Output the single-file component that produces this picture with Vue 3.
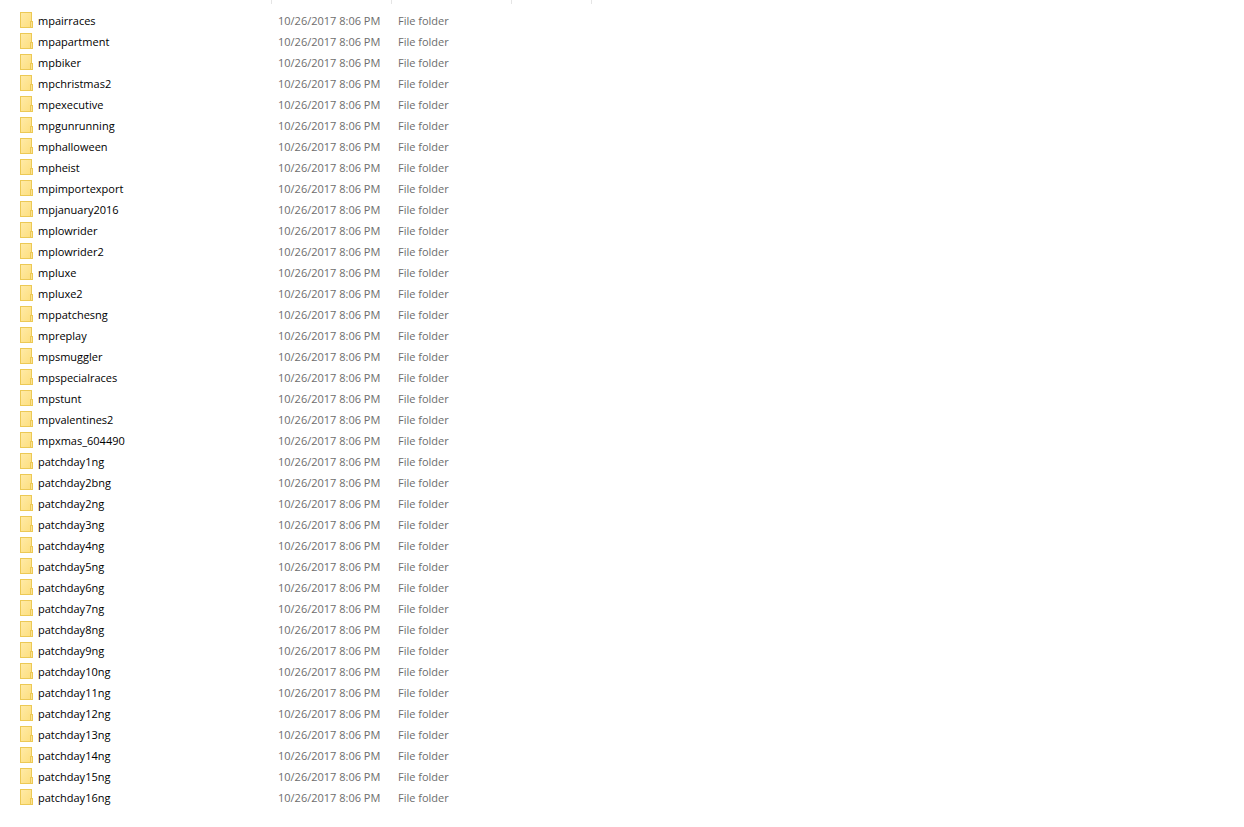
<script setup>
const names = [
  'mpairraces', 'mpapartment', 'mpbiker', 'mpchristmas2', 'mpexecutive', 'mpgunrunning',
  'mphalloween', 'mpheist', 'mpimportexport', 'mpjanuary2016', 'mplowrider', 'mplowrider2',
  'mpluxe', 'mpluxe2', 'mppatchesng', 'mpreplay', 'mpsmuggler', 'mpspecialraces', 'mpstunt',
  'mpvalentines2', 'mpxmas_604490', 'patchday1ng', 'patchday2bng', 'patchday2ng', 'patchday3ng',
  'patchday4ng', 'patchday5ng', 'patchday6ng', 'patchday7ng', 'patchday8ng', 'patchday9ng',
  'patchday10ng', 'patchday11ng', 'patchday12ng', 'patchday13ng', 'patchday14ng', 'patchday15ng',
  'patchday16ng',
]
const modified = '10/26/2017 8:06 PM'
const kind = 'File folder'
</script>

<template>
  <main class="explorer">
    <svg class="defs" width="0" height="0" aria-hidden="true">
      <defs>
        <linearGradient id="folder-fill" x1="0" y1="0" x2="1" y2="1">
          <stop offset="0" stop-color="#ffeaa6" />
          <stop offset="1" stop-color="#fddf80" />
        </linearGradient>
      </defs>
    </svg>
    <div class="header" aria-hidden="true">
      <span class="edge first"></span>
      <span class="edge"></span>
      <span class="edge"></span>
      <span class="edge narrow"></span>
    </div>
    <table class="files">
      <colgroup>
        <col class="col-name" />
        <col class="col-date" />
        <col />
      </colgroup>
      <tbody>
        <tr v-for="name in names" :key="name">
          <td>
            <div class="name">
              <svg class="folder" width="14" height="16" viewBox="0 0 14 16" aria-hidden="true">
                <path d="M0 0H12V9H13V16H0Z" fill="#ecc955" />
                <path d="M1 1H11V9H10V15H1Z" fill="url(#folder-fill)" />
                <path d="M11 10H12V15H11Z" fill="#fde293" />
              </svg>
              <span>{{ name }}</span>
            </div>
          </td>
          <td class="meta">{{ modified }}</td>
          <td class="meta">{{ kind }}</td>
        </tr>
      </tbody>
    </table>
  </main>
</template>

<style>
body {
  margin: 0;
  background: #fff;
}
</style>

<style scoped>
.explorer {
  font-family: "Open Sans", "Noto Sans", sans-serif;
  font-size: 11px;
  color: #000;
  background: #fff;
}
.defs {
  position: absolute;
}
.header {
  display: flex;
  height: 10px;
}
.edge {
  box-sizing: border-box;
  width: 120px;
  height: 4px;
  border-right: 1px solid #e5e5e5;
}
.edge.first {
  width: 272px;
}
.edge.narrow {
  width: 80px;
}
.files {
  width: 100%;
  table-layout: fixed;
  border-collapse: collapse;
}
.col-name {
  width: 278px;
}
.col-date {
  width: 120px;
}
td {
  height: 21px;
  padding: 0;
  line-height: 21px;
  white-space: nowrap;
}
.name {
  display: flex;
  align-items: flex-start;
  gap: 4px;
  padding-left: 20px;
}
.folder {
  flex: none;
  margin-top: 2px;
}
.meta {
  color: #6d6d6d;
}
</style>
